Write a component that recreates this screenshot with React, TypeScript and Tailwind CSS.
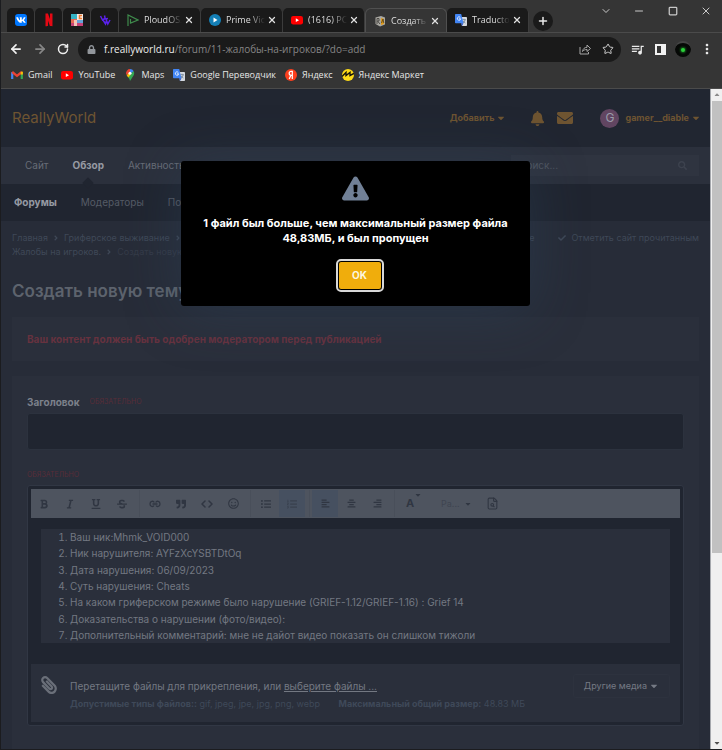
import type { ReactNode } from "react";
import { Star, ChevronDown, Minus, Square, X, Plus, ArrowLeft, ArrowRight, RotateCw, FileSearch, Code } from "lucide-react";
import {
  FaAlignCenter, FaAlignLeft, FaAlignRight, FaAngleRight, FaBell, FaBold, FaCaretDown, FaCheck,
  FaEnvelope, FaExclamationTriangle, FaItalic, FaListOl, FaListUl, FaLock, FaPaperclip,
  FaQuoteRight, FaRegSmile, FaSearch, FaStrikethrough, FaUnderline, FaVk,
} from "react-icons/fa";
import { RiNetflixFill } from "react-icons/ri";
import { MdMoreVert, MdQueueMusic } from "react-icons/md";

function YouTubeIcon() {
  return (
    <svg viewBox="0 0 12 12" className="size-3 shrink-0">
      <rect y="2" width="12" height="8.4" rx="2.2" fill="#f00" />
      <path d="M4.8 4.3v3.8L8 6.2z" fill="#fff" />
    </svg>
  );
}

function TranslateIcon() {
  return (
    <svg viewBox="0 0 12 12" className="size-3 shrink-0">
      <path d="M5 3h6.2a.8.8 0 0 1 .8.8v7.4a.8.8 0 0 1-.8.8H7z" fill="#d5d9df" />
      <path d="M7.2 5.7h3.6M9 4.8v.9M10.2 5.7C9.8 7.3 9 8.2 8 9M8.2 7c.6 1 1.300 1.600 2.200 2" stroke="#617487" strokeWidth=".7" fill="none" />
      <path d="M.8 0h5.4l2.300 9.300H.8a.8.8 0 0 1-.8-.8V.8A.8.8 0 0 1 .8 0z" fill="#4285f4" />
      <path d="M5.300 3.400a1.700 1.700 0 1 0 .4 1.400H4" stroke="#fff" strokeWidth=".8" fill="none" />
      <path d="M6 9.300h2.500L7 12z" fill="#2a56c6" />
    </svg>
  );
}

function StripedIcon() {
  return (
    <svg viewBox="0 0 12 12" className="size-3">
      <rect width="12" height="12" fill="#f5e9e4" />
      <rect width="6" height="5" fill="#35b3c4" />
      <rect y="5" width="6" height="4" fill="#e66a54" />
      <rect y="9" width="12" height="3" fill="#c74378" />
      <path d="M11 1.500H8.500v3H11" stroke="#ee7b2f" strokeWidth="1.500" fill="none" />
      <rect x="6" y="6" width="6" height="3" fill="#66a3d8" />
      <rect x="3" y="6" width="3" height="6" fill="#f3c5b8" />
    </svg>
  );
}

function PurpleIcon() {
  return (
    <svg viewBox="0 0 12 12" className="size-3">
      <path d="M1.500 2l2 4L6 4.500M5.500 1.500l.7 3.500L9 4.500M4 6l2.500 4L7.500 6.500l1.300 3.500L11 6" stroke="#5a22ec" strokeWidth="1.500" fill="none" />
    </svg>
  );
}

function PloudIcon() {
  return (
    <svg viewBox="0 0 12 12" className="size-3 shrink-0">
      <path d="M1 12V1l10 5-7.500 3V5" stroke="#3f8b4c" strokeWidth="1.200" fill="none" />
    </svg>
  );
}

function PrimeIcon() {
  return (
    <svg viewBox="0 0 12 12" className="size-3 shrink-0">
      <circle cx="6" cy="6" r="6" fill="#147fb6" />
      <path d="M4.500 3.500v5l4-2.500z" fill="#fff" />
    </svg>
  );
}

function ForumIcon() {
  return (
    <svg viewBox="0 0 12 12" className="size-3 shrink-0">
      <path d="M1.500 2.500L7 1l4 1.500v7L6 11.500 1.500 9z" fill="#a9a8a2" />
      <path d="M3 9V3.500h2V6H3.500L6 9" stroke="#4d4b47" fill="none" />
      <path d="M7 3l3 1v5L7 10z" fill="#e09a19" />
      <path d="M7.500 8l1.500-4 .8 4" stroke="#51401e" strokeWidth=".8" fill="none" />
    </svg>
  );
}

function GmailIcon() {
  return (
    <svg viewBox="0 0 12 12" className="size-3 shrink-0">
      <path d="M1.200 10V3.200" stroke="#4285f4" strokeWidth="2.200" />
      <path d="M10.800 10V3.200" stroke="#34a853" strokeWidth="2.200" />
      <path d="M1.200 3L6 6.800 10.800 3" stroke="#ea4335" strokeWidth="2.300" fill="none" />
      <path d="M9.700 3.200l1.300-1 .9.800v2.400H9.700z" fill="#fbbc04" />
    </svg>
  );
}

function MapsIcon() {
  return (
    <svg viewBox="0 0 12 12" className="size-3 shrink-0">
      <path d="M6 0a4 4 0 0 0-3 1.400L6 4z" fill="#ea4335" />
      <path d="M6 0a4.200 4.200 0 0 1 3.700 2.200L6 5z" fill="#4285f4" />
      <path d="M3 1.400A4.300 4.300 0 0 0 2.500 6L6 3z" fill="#ea4335" />
      <path d="M9.700 2.200c.9 1.800.5 3.300-.5 4.800L6 12C5.700 9.500 4 8.500 2.700 6.300L5 5.500z" fill="#34a853" />
      <path d="M2.700 6.300L5 3.500 6.500 6 4.300 8.500z" fill="#fbbc04" />
      <circle cx="6" cy="4.200" r="1.500" fill="#fff" />
    </svg>
  );
}

function YandexIcon() {
  return (
    <svg viewBox="0 0 12 12" className="size-3 shrink-0">
      <circle cx="6" cy="6" r="6" fill="#fc3f1d" />
      <path d="M7.300 10V2.400H6.100a1.900 1.900 0 0 0 0 3.900h1.200M5.900 6.300L4.200 10" stroke="#fff" strokeWidth="1.200" fill="none" />
    </svg>
  );
}

function MarketIcon() {
  return (
    <svg viewBox="0 0 12 12" className="size-3 shrink-0">
      <circle cx="6" cy="6" r="6" fill="#fddb18" />
      <path d="M0 7.500L4 3.500v3L8 3.500v3L12 4.500" stroke="#17150b" strokeWidth="1.400" fill="none" />
    </svg>
  );
}

function ShareIcon() {
  return (
    <svg viewBox="0 0 12 12" className="size-3" fill="none" stroke="#a6a6a6" strokeLinejoin="round">
      <path d="M1 4v7h8.500V9" />
      <path d="M3.500 8.500C4 5.500 5.500 4.500 8 4.300V2l3.500 3.500L8 8.500V6.500c-2 0-3.300.5-4.500 2z" />
    </svg>
  );
}

const pinned: { name: string; icon: ReactNode }[] = [
  { name: "VK", icon: <span className="grid size-3 place-items-center rounded-[3px] bg-[#0077ff]"><FaVk className="size-[10px] text-white" /></span> },
  { name: "Netflix", icon: <RiNetflixFill className="size-[14px] text-[#e50914]" /> },
  { name: "Colors", icon: <StripedIcon /> },
  { name: "Purple", icon: <PurpleIcon /> },
];

const tabs = [
  { title: "PloudOS.", icon: <PloudIcon /> },
  { title: "Prime Vic", icon: <PrimeIcon /> },
  { title: "(1616) PC", icon: <YouTubeIcon /> },
  { title: "Создать", icon: <ForumIcon />, active: true },
  { title: "Traducto", icon: <TranslateIcon /> },
];

function TabStrip() {
  return (
    <div className="flex h-[33px] items-end border-b border-[#4b4b4b] pl-[6px]">
      {pinned.map((p) => (
        <button key={p.name} aria-label={p.name} className="grid h-6 w-7 place-items-center rounded-t-[5px] border-r border-[#3c3c3c] bg-[#1a1a1a]">
          {p.icon}
        </button>
      ))}
      {tabs.map((t) => (
        <div
          key={t.title}
          className={
            t.active
              ? "flex h-6 w-[82px] items-center rounded-t-[6px] border border-b-0 border-[#505050] bg-[#353535] pr-1 pl-2"
              : "flex h-6 w-[82px] items-center rounded-t-[5px] border-r border-[#3c3c3c] bg-[#1a1a1a] pr-1 pl-2"
          }
        >
          {t.icon}
          <span className="ml-[5px] flex-1 text-[9px] whitespace-nowrap text-[#dedede] [mask-image:linear-gradient(to_right,#000_60%,transparent)]">{t.title}</span>
          <button aria-label="Закрыть вкладку" className="grid size-[14px] shrink-0 place-items-center text-[#e0e0e0]">
            <X className="size-[10px]" strokeWidth={3} />
          </button>
        </div>
      ))}
      <button aria-label="Новая вкладка" className="mb-[1px] ml-1 grid size-5 place-items-center rounded-full bg-[#1a1a1a] text-[#e8e8e8]">
        <Plus className="size-3" strokeWidth={3} />
      </button>
      <div className="ml-auto flex self-start text-[#c9c9c9]">
        <button aria-label="Поиск вкладок" className="grid h-[22px] w-[33px] place-items-center"><ChevronDown className="size-3" /></button>
        <button aria-label="Свернуть" className="grid h-[22px] w-[34px] place-items-center"><Minus className="size-3" /></button>
        <button aria-label="Развернуть" className="grid h-[22px] w-[33px] place-items-center"><Square className="size-[10px]" strokeWidth={3} /></button>
        <button aria-label="Закрыть" className="grid h-[22px] w-[33px] place-items-center"><X className="size-3" /></button>
      </div>
    </div>
  );
}

function AddressBar() {
  return (
    <div className="flex h-8 items-center pr-[7px] pl-[3px]">
      <button aria-label="Назад" className="grid w-6 place-items-center text-[#efefef]"><ArrowLeft className="size-[14px]" strokeWidth={3} /></button>
      <button aria-label="Вперёд" className="grid w-6 place-items-center text-[#868686]"><ArrowRight className="size-[14px]" strokeWidth={3} /></button>
      <button aria-label="Обновить" className="grid w-[22px] place-items-center text-[#efefef]"><RotateCw className="size-3" strokeWidth={3} /></button>
      <div className="ml-1 flex h-[25px] flex-1 items-center rounded-full bg-[#1a1a1a] pr-[7px] pl-[9px]">
        <FaLock className="size-[9px] text-[#92969b]" />
        <button className="ml-2 flex-1 text-left text-[10px] whitespace-nowrap text-[#868686]">
          <span className="text-[#ededed]">f.reallyworld.ru</span>/forum/11-жалобы-на-игроков/?do=add
        </button>
        <button aria-label="Поделиться" className="mr-[11px]"><ShareIcon /></button>
        <button aria-label="В закладки" className="text-[#d0d0d0]"><Star className="size-3" strokeWidth={2} /></button>
      </div>
      <button aria-label="Управление медиа" className="ml-2 grid w-4 place-items-center text-[#ececec]"><MdQueueMusic className="size-[15px]" /></button>
      <button aria-label="Боковая панель" className="ml-[7px] grid w-4 place-items-center">
        <span className="flex h-[11px] w-[11px] justify-end border-2 border-[#f2f2f2]"><span className="w-[3px] bg-[#f2f2f2]" /></span>
      </button>
      <button aria-label="Профиль" className="ml-[7px] grid size-4 place-items-center rounded-full border-t-2 border-[#454545] bg-[#060806]">
        <span className="size-1 rounded-full bg-[#2bd13a] shadow-[0_0_2px_1px_#14611c]" />
      </button>
      <button aria-label="Меню" className="ml-2 grid w-4 place-items-center text-[#ececec]"><MdMoreVert className="size-4" /></button>
    </div>
  );
}

function Bookmarks() {
  return (
    <nav className="flex h-[23px] items-center gap-[9px] pb-[3px] pl-[10px] text-[9px] whitespace-nowrap text-[#e6e6e6]">
      <a href="#gmail" className="flex items-center gap-[5px]"><GmailIcon />Gmail</a>
      <a href="#youtube" className="flex items-center gap-[5px]"><YouTubeIcon />YouTube</a>
      <a href="#maps" className="flex items-center gap-[5px]"><MapsIcon />Maps</a>
      <a href="#translate" className="flex items-center gap-[5px]"><TranslateIcon />Google Переводчик</a>
      <a href="#yandex" className="flex items-center gap-[5px]"><YandexIcon />Яндекс</a>
      <a href="#market" className="flex items-center gap-[5px]"><MarketIcon />Яндекс Маркет</a>
    </nav>
  );
}

function SiteHeader() {
  return (
    <header className="flex h-[58px] shrink-0 items-center bg-[#212631] pr-[9px] pl-[11px] text-[#6e5431]">
      <a href="#home" className="text-[15px]">ReallyWorld</a>
      <button className="ml-auto flex items-center gap-[2px] text-[9px] font-bold">Добавить<FaCaretDown className="size-[10px]" /></button>
      <button aria-label="Уведомления" className="ml-[24px]"><FaBell className="size-[15px]" /></button>
      <button aria-label="Сообщения" className="ml-3"><FaEnvelope className="size-4" /></button>
      <span className="ml-[27px] grid size-[19px] place-items-center rounded-full bg-[#614561] text-[12px] text-[#9a9caa]">G</span>
      <button className="ml-[6px] flex items-center gap-[2px] text-[9px] font-bold">gamer__diable<FaCaretDown className="size-[10px]" /></button>
    </header>
  );
}

function SiteNav() {
  return (
    <>
      <nav className="flex h-[37px] shrink-0 items-center gap-6 bg-[#2b303c] pr-[11px] pl-6 text-[10px] text-[#676c77]">
        <a href="#site">Сайт</a>
        <a href="#browse" className="relative font-bold text-[#969aa3]">
          Обзор
          <span className="absolute top-[21px] left-[11px] size-2 rotate-45 bg-[#202530]" />
        </a>
        <a href="#activity">Активность</a>
        <form className="ml-auto flex h-[21px] w-[188px] items-center bg-[#2f3440] pr-3 pl-2">
          <input aria-label="Поиск" placeholder="Поиск..." className="w-full min-w-0 flex-1 bg-transparent outline-none placeholder:text-[#505661]" />
          <FaSearch className="size-[9px] text-[#3d424e]" />
        </form>
      </nav>
      <nav className="flex h-[37px] shrink-0 items-center gap-6 bg-[#202530] pl-[13px] text-[10px] text-[#555b66]">
        <a href="#forums" className="font-bold text-[#969aa3]">Форумы</a>
        <a href="#moderators">Модераторы</a>
        <a href="#users">Пользователи</a>
      </nav>
    </>
  );
}

function Tool({ label, active, children }: { label: string; active?: boolean; children: ReactNode }) {
  return (
    <button aria-label={label} className={active ? "grid h-[27px] w-[26px] place-items-center bg-[#465060]" : "grid h-[27px] w-[26px] place-items-center"}>
      {children}
    </button>
  );
}

function EditorToolbar() {
  return (
    <div role="toolbar" className="flex h-[29px] items-center bg-[#4e545f] text-[11px] text-[#303642]">
      <div className="mr-[2px] flex border-r border-[#494f5a] pr-1">
        <Tool label="Жирный"><FaBold className="size-[10px]" /></Tool>
        <Tool label="Курсив"><FaItalic className="size-[10px]" /></Tool>
        <Tool label="Подчёркнутый"><FaUnderline className="size-[10px]" /></Tool>
        <Tool label="Зачёркнутый"><FaStrikethrough className="size-[10px]" /></Tool>
      </div>
      <div className="mr-[2px] flex border-r border-[#494f5a] pr-1">
        <Tool label="Ссылка">
          <svg viewBox="0 0 12 8" className="h-2 w-3" fill="none" stroke="currentColor" strokeWidth="1.300">
            <path d="M5 5.500C4.300 7 1 7 1 4s3.300-3.500 4.300-1.500M7 5.500C7.700 7 11 7 11 4S7.700.5 6.700 2.500M3.500 4h5" />
          </svg>
        </Tool>
        <Tool label="Цитата"><FaQuoteRight className="size-[10px]" /></Tool>
        <Tool label="Код"><Code className="size-3" strokeWidth={3} /></Tool>
        <Tool label="Смайлы"><FaRegSmile className="size-[11px]" /></Tool>
      </div>
      <div className="mr-[2px] flex border-r border-[#494f5a] pr-1">
        <Tool label="Маркированный список"><FaListUl className="size-[10px]" /></Tool>
        <Tool label="Нумерованный список" active><FaListOl className="size-[10px] opacity-60" /></Tool>
      </div>
      <div className="mr-[2px] flex border-r border-[#494f5a] pr-1">
        <Tool label="По левому краю" active><FaAlignLeft className="size-[9px]" /></Tool>
        <Tool label="По центру"><FaAlignCenter className="size-[9px]" /></Tool>
        <Tool label="По правому краю"><FaAlignRight className="size-[9px]" /></Tool>
      </div>
      <Tool label="Цвет текста">
        <span className="relative font-bold">A<FaCaretDown className="absolute -top-1 left-2 size-2" /></span>
      </Tool>
      <button aria-label="Размер" className="ml-[18px] flex items-center gap-1 text-[9px]"><span className="text-[#3f4551]">Ра...</span><FaCaretDown className="size-2" /></button>
      <span className="w-2" />
      <Tool label="Предпросмотр"><FileSearch className="size-[13px]" /></Tool>
    </div>
  );
}

const answers = [
  "Ваш ник:Mhmk_VOID000",
  "Ник нарушителя: AYFzXcYSBTDtOq",
  "Дата нарушения: 06/09/2023",
  "Суть нарушения: Cheats",
  "На каком гриферском режиме было нарушение (GRIEF-1.12/GRIEF-1.16) : Grief 14",
  "Доказательства о нарушении (фото/видео):",
  "Дополнительный комментарий: мне не дайот видео показать он слишком тижоли",
];

function Editor() {
  return (
    <div className="rounded-[3px] border border-[#313744] bg-[#202530] p-[3px]">
      <EditorToolbar />
      <div className="px-[10px] pt-[11px] pb-[21px]">
        <ol
          contentEditable
          suppressContentEditableWarning
          aria-label="Сообщение"
          className="flex h-[114px] list-decimal flex-col justify-between bg-[#2a2f3b] pl-[29px] text-[10px] leading-4 text-[#737882] outline-none"
        >
          {answers.map((a) => (
            <li key={a}>{a}</li>
          ))}
        </ol>
      </div>
      <div className="flex h-[58px] items-start bg-[#2a2f3b] pr-[10px] pl-[9px]">
        <FaPaperclip className="mt-3 size-[18px] -scale-x-100 text-[#6a6f79]" />
        <div className="mt-[14px] ml-3 whitespace-nowrap">
          <p className="text-[10px] leading-4 text-[#737882]">
            Перетащите файлы для прикрепления, или <a href="#files" className="underline">выберите файлы ...</a>
          </p>
          <p className="mt-[2px] text-[9px] leading-4 text-[#3f4959]">
            <b>Допустимые типы файлов::</b> gif, jpeg, jpe, jpg, png, webp <b className="ml-4">Максимальный общий размер:</b> 48.83 МБ
          </p>
        </div>
        <button className="mt-[10px] ml-auto flex h-6 items-center gap-[2px] rounded-[3px] border border-[#2d323e] px-[10px] text-[9px] text-[#757a84]">
          Другие медиа<FaCaretDown className="size-[10px]" />
        </button>
      </div>
    </div>
  );
}

function TopicForm() {
  return (
    <main className="flex-1 px-[11px] pt-[10px]">
      <div className="flex justify-between text-[9px] leading-[14px] text-[#3f4857]">
        <nav>
          <div className="flex items-center gap-1">
            <a href="#main">Главная</a><FaAngleRight className="size-2" />
            <a href="#grief">Гриферское выживание</a><FaAngleRight className="size-2" />
          </div>
          <div className="flex items-center gap-1">
            <a href="#complaints">Жалобы на игроков.</a><FaAngleRight className="size-2" />
            <span className="text-[#353b48]">Создать новую тему</span>
          </div>
        </nav>
        <div className="flex items-start gap-6">
          <a href="#all">Все</a>
          <a href="#read" className="flex items-center gap-[5px]"><FaCheck className="size-2" />Отметить сайт прочитанным</a>
        </div>
      </div>
      <h1 className="mt-5 text-[17px] leading-6 font-semibold text-[#5d636d]">Создать новую тему</h1>
      <p className="mt-[14px] bg-[#2a2f3b] px-[15px] py-[14px] text-[10px] leading-4 font-bold text-[#66323f]">
        Ваш контент должен быть одобрен модератором перед публикацией
      </p>
      <form className="mt-[15px] bg-[#2a2f3b] px-[15px] pt-[18px] pb-10">
        <label htmlFor="topic" className="flex items-center gap-[10px] text-[10px] leading-4 font-bold text-[#7c818b]">
          Заголовок <span className="text-[7px] font-normal text-[#592d39]">ОБЯЗАТЕЛЬНО</span>
        </label>
        <input id="topic" className="mt-[3px] block h-[37px] w-full rounded-[3px] border border-[#2c323e] bg-[#202530] px-2 text-[10px] text-[#757a84] outline-none" />
        <p className="mt-[17px] mb-[2px] text-[7px] leading-4 text-[#592d39]">ОБЯЗАТЕЛЬНО</p>
        <Editor />
      </form>
    </main>
  );
}

function Scrollbar() {
  return (
    <div aria-hidden="true" className="flex w-3 shrink-0 flex-col items-center border-l border-[#a5a8ad] bg-[#f0f0f0]">
      <span className="grid h-3 place-items-center text-[#8b8b8b]"><FaCaretDown className="size-2 rotate-180" /></span>
      <span className="h-[452px] w-[10px] bg-[#c1c1c1]" />
      <span className="mt-auto grid h-3 place-items-center text-[#505050]"><FaCaretDown className="size-2" /></span>
    </div>
  );
}

function Alert() {
  return (
    <div className="absolute inset-x-0 top-[72px] flex justify-center">
      <div role="alertdialog" aria-labelledby="alert-text" className="flex w-[349px] flex-col items-center rounded-[3px] bg-black pt-[14px] pb-4 shadow-[0_5px_55px_rgba(46,70,96,0.4)]">
        <FaExclamationTriangle className="size-[27px] text-[#718096]" />
        <p id="alert-text" className="mt-[14px] px-4 text-center text-[11px] leading-[15px] font-bold text-white">
          1 файл был больше, чем максимальный размер файла 48,83МБ, и был пропущен
        </p>
        <button className="mt-[15px] ml-2 h-[29px] w-11 rounded-[3px] border border-black bg-[#f0ad0c] text-[10px] font-bold text-[#fdf6df] outline-2 outline-[#d8d8d8]">OK</button>
      </div>
    </div>
  );
}

export default function App() {
  return (
    <div className="flex h-screen flex-col overflow-hidden border-b border-l border-[#1b1c1f] bg-[#353535]">
      <div className="shrink-0 border-b border-[#4b4b4b] font-['Open_Sans','Noto_Sans',sans-serif]">
        <TabStrip />
        <AddressBar />
        <Bookmarks />
      </div>
      <div className="flex min-h-0 flex-1">
        <div className="relative flex min-w-0 flex-1 flex-col overflow-hidden bg-[#272c38] font-['Inter',sans-serif]">
          <SiteHeader />
          <SiteNav />
          <TopicForm />
          <Alert />
        </div>
        <Scrollbar />
      </div>
    </div>
  );
}
